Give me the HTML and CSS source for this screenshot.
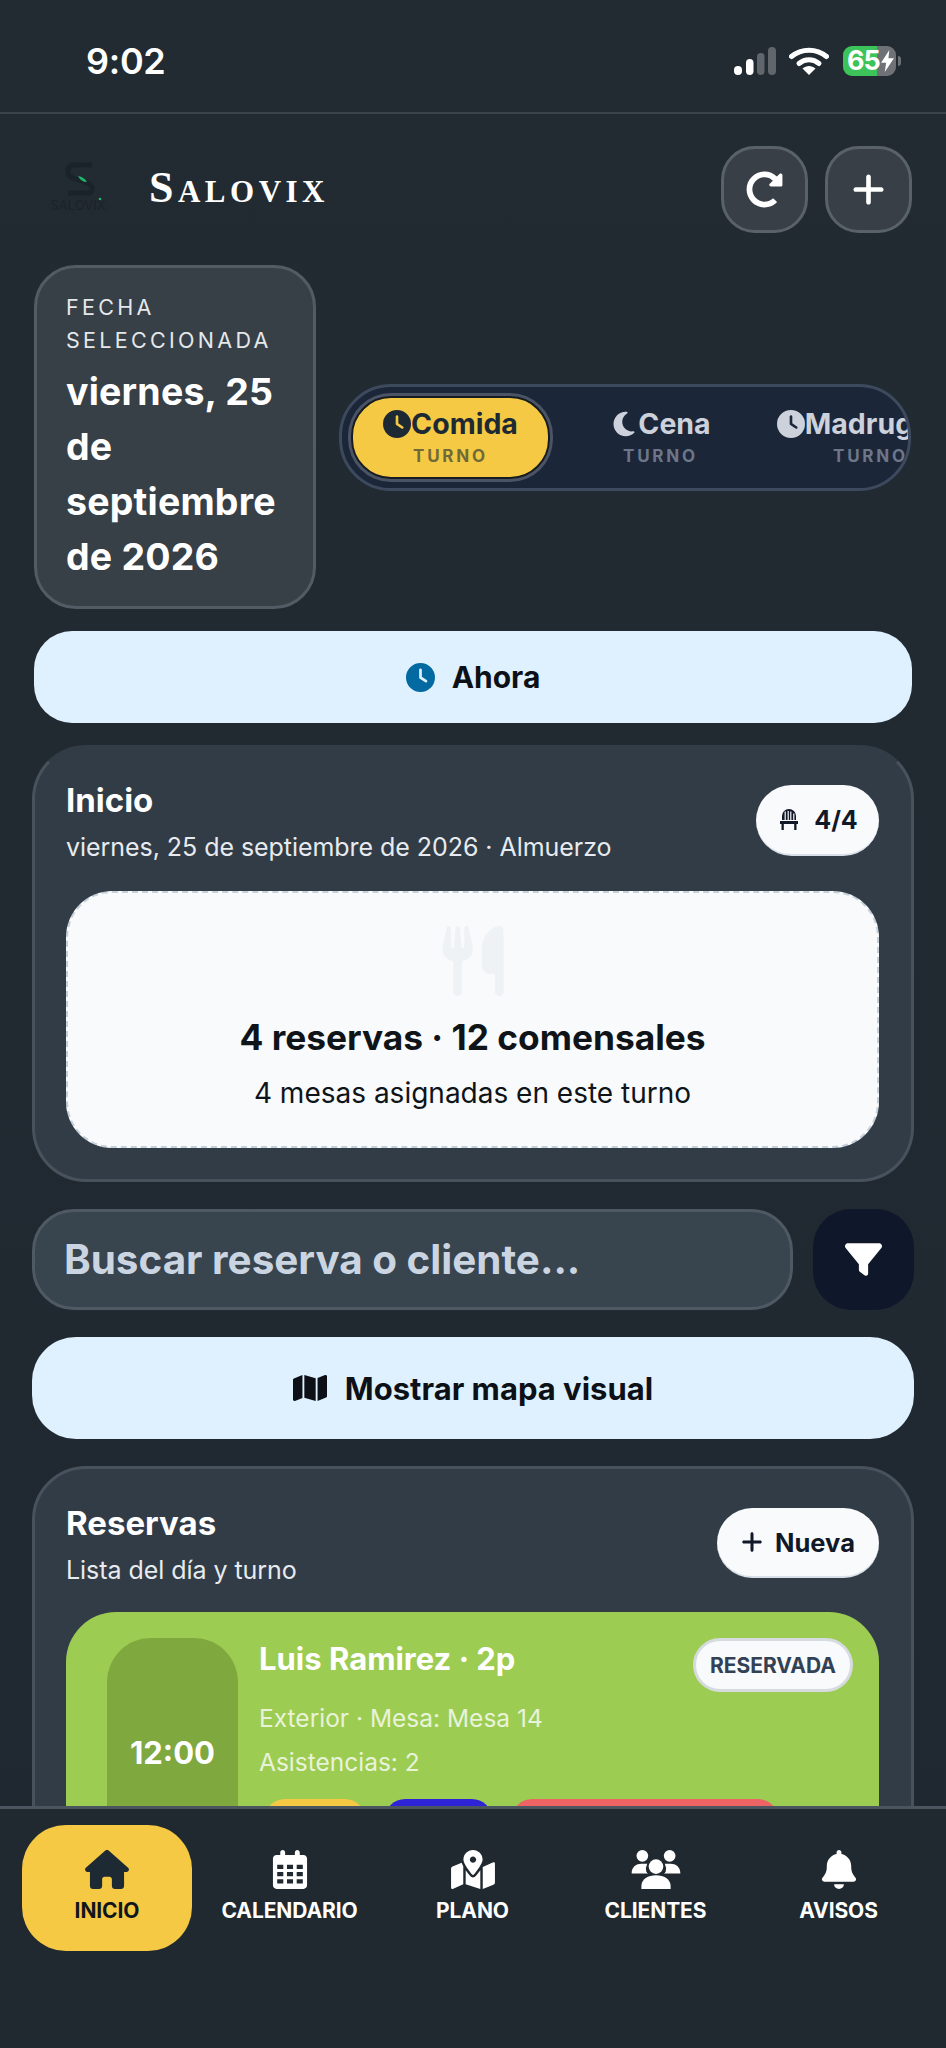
FILE: index.html
```html
<!DOCTYPE html>
<html lang="es">
<head>
    <meta charset="UTF-8">
    <meta name="viewport" content="width=device-width, initial-scale=1.0">
    <link rel="stylesheet" href="styles.css">
    <title>Salovix</title>
</head>
<body>
    <div class="phone">
        <div class="status">
            <span class="status_time">9:02</span>
            <div class="status_icons">
                <svg class="signal" viewBox="0 0 42 28">
                    <rect x="0" y="19" width="8" height="9" rx="4" fill="#fff"/>
                    <rect x="12" y="12" width="7.5" height="16" rx="3.7" fill="#fff"/>
                    <rect x="23" y="6" width="7.5" height="22" rx="3.7" fill="#60666c"/>
                    <rect x="34" y="0" width="8" height="28" rx="4" fill="#60666c"/>
                </svg>
                <svg class="wifi" viewBox="0 0 40 28">
                    <path d="M2.5 9.5C12.500 1 27.500 1 37.500 9.500" fill="none" stroke="#fff" stroke-width="5" stroke-linecap="round"/>
                    <path d="M10 16.500C16 11.500 24 11.500 30 16.500" fill="none" stroke="#fff" stroke-width="5" stroke-linecap="round"/>
                    <path d="M13.500 21.500C17.500 18 22.500 18 26.500 21.500L20 28Z" fill="#fff"/>
                </svg>
                <div class="battery">
                    <span>65</span>
                    <svg viewBox="0 0 14 24"><path d="M9 0 0 14h5.500L4 24 14 9H8Z" fill="#fff"/></svg>
                </div>
                <div class="battery_nub"></div>
            </div>
        </div>

        <div class="top">
            <div class="brand">
                <svg class="logo" viewBox="0 0 64 56">
                    <path d="M46 3H28Q22 3 22 8V11Q22 14 27 16L41 21Q46 23 46 26V28Q46 31 40 31H22" fill="none" stroke="#1a222a" stroke-width="5"/>
                    <path d="M32 14Q38 15 41 20Q35 20 32 14Z" fill="#1fb868"/>
                    <circle cx="54" cy="37" r="1.300" fill="#1fb868"/>
                    <text x="32" y="48" text-anchor="middle" class="logo_text">SALOVIX</text>
                </svg>
                <span class="brand_name">Salovix</span>
            </div>
            <div class="top_btns">
                <button class="round_btn">
                    <svg viewBox="0 0 512 512"><path d="M256.500 8c66.300.1 126.400 26.200 170.900 68.700l35.700-35.700C478.100 25.900 504 36.600 504 57.900V192c0 13.300-10.700 24-24 24H345.900c-21.400 0-32.100-25.900-17-41l41.800-41.700c-30.900-28.900-70.800-44.900-113.200-45.300-92.400-.8-170.300 74-169.500 169.400C88.800 348 162.200 424 256 424c41.100 0 80-14.700 110.600-41.600 4.700-4.100 11.900-3.900 16.400.6l39.700 39.700c4.900 4.900 4.600 12.800-.5 17.400C378.200 479.800 319.900 504 256 504 119 504 8 393 8 256 8 119.200 119.600 7.800 256.500 8z"/></svg>
                </button>
                <button class="round_btn">
                    <svg viewBox="0 0 448 512"><path d="M256 80c0-17.700-14.300-32-32-32s-32 14.300-32 32V224H48c-17.700 0-32 14.300-32 32s14.300 32 32 32H192V432c0 17.700 14.300 32 32 32s32-14.300 32-32V288H400c17.700 0 32-14.300 32-32s-14.300-32-32-32H256V80z"/></svg>
                </button>
            </div>
        </div>

        <div class="content">
            <div class="date_row">
                <div class="date_card">
                    <div class="date_label">FECHA SELECCIONADA</div>
                    <div class="date_value">viernes, 25 de septiembre de 2026</div>
                </div>
                <div class="shifts">
                    <div class="shift shift_active">
                        <div class="shift_name">
                            <svg viewBox="0 0 512 512"><path d="M256 0a256 256 0 1 1 0 512A256 256 0 1 1 256 0zM232 120V256c0 8 4 15.500 10.700 20l96 64c11 7.400 25.900 4.400 33.300-6.700s4.400-25.900-6.700-33.300L280 243.200V120c0-13.300-10.700-24-24-24s-24 10.700-24 24z"/></svg>
                            Comida
                        </div>
                        <div class="shift_sub">TURNO</div>
                    </div>
                    <div class="shift">
                        <div class="shift_name">
                            <svg viewBox="0 0 384 512"><path d="M223.500 32C100 32 0 132.300 0 256S100 480 223.500 480c60.600 0 115.500-24.200 155.800-63.400c5-4.900 6.300-12.500 3.100-18.700s-10.100-9.700-17-8.500c-9.800 1.700-19.800 2.600-30.100 2.600c-96.900 0-175.500-78.800-175.500-176c0-65.800 36-123.100 89.300-153.300c6.100-3.500 9.200-10.500 7.700-17.300s-7.300-11.900-14.300-12.500c-6.300-.5-12.600-.8-19-.8z"/></svg>
                            Cena
                        </div>
                        <div class="shift_sub">TURNO</div>
                    </div>
                    <div class="shift">
                        <div class="shift_name">
                            <svg viewBox="0 0 512 512"><path d="M256 0a256 256 0 1 1 0 512A256 256 0 1 1 256 0zM232 120V256c0 8 4 15.500 10.700 20l96 64c11 7.400 25.900 4.400 33.300-6.700s4.400-25.900-6.700-33.300L280 243.200V120c0-13.300-10.700-24-24-24s-24 10.700-24 24z"/></svg>
                            Madrugada
                        </div>
                        <div class="shift_sub">TURNO</div>
                    </div>
                </div>
            </div>

            <button class="light_btn now_btn">
                <svg viewBox="0 0 512 512"><path d="M256 0a256 256 0 1 1 0 512A256 256 0 1 1 256 0zM232 120V256c0 8 4 15.500 10.700 20l96 64c11 7.400 25.900 4.400 33.300-6.700s4.400-25.900-6.700-33.300L280 243.200V120c0-13.300-10.700-24-24-24s-24 10.700-24 24z"/></svg>
                Ahora
            </button>

            <div class="panel panel_summary">
                <div class="panel_head">
                    <div>
                        <div class="panel_title">Inicio</div>
                        <div class="panel_sub">viernes, 25 de septiembre de 2026 · Almuerzo</div>
                    </div>
                    <div class="pill">
                        <svg viewBox="0 0 24 24"><path d="M5 12V8a7 7 0 0 1 14 0v4h-1.600V5.500h-1.200V12h-1.800V3.500h-1.200V12h-1.400V3h-1.200v9H8.800V3.500H7.600V12ZM3 13h18v3h-1.500v6h-2.300v-6H6.800v6H4.500v-6H3Z"/></svg>
                        4/4
                    </div>
                </div>
                <div class="summary_box">
                    <svg class="summary_icon" viewBox="0 0 448 512"><path d="M416 0C400 0 288 32 288 176V288c0 35.300 28.700 64 64 64h32V480c0 17.700 14.300 32 32 32s32-14.300 32-32V352 240 32c0-17.700-14.300-32-32-32zM64 16C64 7.800 57.900 1 49.700 .1S34.200 4.600 32.400 12.500L2.100 148.800C.7 155.100 0 161.500 0 167.900c0 45.900 35.100 83.600 80 87.700V480c0 17.700 14.300 32 32 32s32-14.300 32-32V255.600c44.900-4.100 80-41.800 80-87.700c0-6.400-.7-12.800-2.100-19.100L191.600 12.500c-1.800-8-9.300-13.300-17.400-12.400S160 7.800 160 16V150.200c0 5.400-4.400 9.800-9.800 9.800c-5.100 0-9.300-3.900-9.800-9L127.900 14.600C127.200 6.300 120.300 0 112 0s-15.200 6.300-15.900 14.600L83.700 151c-.5 5.100-4.700 9-9.800 9c-5.400 0-9.800-4.400-9.800-9.800V16z"/></svg>
                    <div class="summary_title">4 reservas · 12 comensales</div>
                    <div class="summary_sub">4 mesas asignadas en este turno</div>
                </div>
            </div>

            <div class="search_row">
                <div class="search_box">Buscar reserva o cliente...</div>
                <button class="filter_btn">
                    <svg viewBox="0 0 512 512"><path d="M3.900 54.900C10.500 40.900 24.500 32 40 32H472c15.500 0 29.500 8.900 36.100 22.900s4.600 30.500-5.200 42.500L320 320.900V448c0 12.100-6.800 23.200-17.700 28.600s-23.800 4.300-33.500-3l-64-48c-8.100-6-12.800-15.500-12.800-25.600V320.900L9 97.300C-.7 85.400-2.800 68.800 3.900 54.900z"/></svg>
                </button>
            </div>

            <button class="light_btn map_btn">
                <svg viewBox="0 0 576 512"><path d="M384 476.100L192 421.200V35.900L384 90.800V476.100zm32-1.200V88.400L543.100 37.500c15.800-6.300 32.900 5.300 32.900 22.300V394.600c0 9.800-6 18.600-15.100 22.300L416 474.800zM15.100 95.100L160 37.200V423.600L32.900 474.500C17.100 480.800 0 469.200 0 452.200V117.400c0-9.800 6-18.600 15.100-22.300z"/></svg>
                Mostrar mapa visual
            </button>

            <div class="panel panel_list">
                <div class="panel_head">
                    <div>
                        <div class="panel_title">Reservas</div>
                        <div class="panel_sub">Lista del día y turno</div>
                    </div>
                    <button class="pill pill_new">
                        <svg viewBox="0 0 448 512"><path d="M256 80c0-17.700-14.300-32-32-32s-32 14.300-32 32V224H48c-17.700 0-32 14.300-32 32s14.300 32 32 32H192V432c0 17.700 14.300 32 32 32s32-14.300 32-32V288H400c17.700 0 32-14.300 32-32s-14.300-32-32-32H256V80z"/></svg>
                        Nueva
                    </button>
                </div>
                <div class="booking">
                    <div class="booking_time">12:00</div>
                    <div class="booking_info">
                        <div class="booking_head">
                            <div class="booking_name">Luis Ramirez · 2p</div>
                            <div class="booking_state">RESERVADA</div>
                        </div>
                        <div class="booking_line">Exterior · Mesa: Mesa 14</div>
                        <div class="booking_line">Asistencias: 2</div>
                        <div class="booking_tags">
                            <span class="tag tag_yellow"></span>
                            <span class="tag tag_blue"></span>
                            <span class="tag tag_red"></span>
                        </div>
                    </div>
                </div>
            </div>
        </div>

        <div class="nav">
            <div class="nav_item nav_active">
                <svg viewBox="0 0 576 512"><path d="M575.800 255.500c0 18-15 32.100-32 32.100h-32l.7 160.200c0 2.700-.2 5.400-.5 8.100V472c0 22.100-17.900 40-40 40H456c-1.100 0-2.200 0-3.300-.1c-1.400 .1-2.800 .1-4.200 .1H416 392c-22.100 0-40-17.900-40-40V448 384c0-17.700-14.300-32-32-32H256c-17.700 0-32 14.300-32 32v64 24c0 22.100-17.900 40-40 40H160 128.100c-1.500 0-3-.1-4.500-.2c-1.200 .1-2.400 .2-3.600 .2H104c-22.100 0-40-17.900-40-40V360c0-.9 0-1.900 .1-2.800V287.600H32c-18 0-32-14-32-32.100c0-9 3-17 10-24L266.400 8c7-7 15-8 22-8s15 2 21 7L564.800 231.500c8 7 12 15 11 24z"/></svg>
                <span>INICIO</span>
            </div>
            <div class="nav_item">
                <svg viewBox="0 0 448 512"><path d="M128 0c17.700 0 32 14.300 32 32V64H288V32c0-17.700 14.300-32 32-32s32 14.300 32 32V64h48c26.500 0 48 21.500 48 48V464c0 26.500-21.500 48-48 48H48c-26.500 0-48-21.500-48-48V112C0 85.500 21.500 64 48 64H96V32c0-17.700 14.300-32 32-32zM56 192v56h80V192Zm128 0v56h80V192Zm128 0v56h80V192ZM56 288v56h80V288Zm128 0v56h80V288Zm128 0v56h80V288ZM56 384v56h80V384Zm128 0v56h80V384Zm128 0v56h80V384Z" fill-rule="evenodd"/></svg>
                <span>CALENDARIO</span>
            </div>
            <div class="nav_item">
                <svg viewBox="0 0 576 512"><path d="M288 0c-69.590 0-126 56.410-126 126 0 56.260 82.350 158.800 113.900 196.020 6.390 7.540 17.820 7.540 24.200 0C331.650 284.800 414 182.260 414 126 414 56.410 357.590 0 288 0zm0 168c-23.200 0-42-18.800-42-42s18.800-42 42-42 42 18.800 42 42-18.800 42-42 42zM20.120 215.950A32.006 32.006 0 0 0 0 245.660v250.320c0 11.320 11.430 19.060 21.940 14.860L160 448V214.920c-8.840-15.980-16.070-31.540-21.250-46.420L20.120 215.950zM288 359.670c-14.070 0-27.380-6.180-36.510-16.960-19.660-23.200-40.570-49.620-59.490-76.720V448l192 64V266c-18.920 27.090-39.820 53.520-59.490 76.720-9.130 10.770-22.440 16.950-36.510 16.950zm266.060-198.510L416 224v288l139.880-55.950A31.996 31.996 0 0 0 576 426.340V176.020c0-11.320-11.430-19.060-21.940-14.860z"/></svg>
                <span>PLANO</span>
            </div>
            <div class="nav_item">
                <svg class="nav_users" viewBox="0 0 50 40">
                    <circle cx="11" cy="6" r="6"/>
                    <circle cx="39" cy="6" r="6"/>
                    <path d="M0 24C0 17 5 14 10 14H16Q14 18 15 22 16 24 17 24Z"/>
                    <path d="M50 24C50 17 45 14 40 14H34Q36 18 35 22 34 24 33 24Z"/>
                    <circle cx="25" cy="17" r="7.500"/>
                    <path d="M10 40V37C10 30 17 26 25 26S40 30 40 37V40Z"/>
                </svg>
                <span>CLIENTES</span>
            </div>
            <div class="nav_item">
                <svg viewBox="0 0 448 512"><path d="M224 0c-17.700 0-32 14.300-32 32V51.200C119 66 64 130.600 64 208v18.800c0 47-17.300 92.400-48.500 127.600l-7.400 8.300c-8.400 9.400-10.400 22.900-5.300 34.400S19.400 416 32 416H416c12.600 0 24-7.400 29.200-18.900s3.100-25-5.300-34.400l-7.400-8.300C401.300 319.200 384 273.900 384 226.800V208c0-77.400-55-142-128-156.800V32c0-17.700-14.300-32-32-32zm45.300 493.300c12-12 18.700-28.300 18.700-45.300H224 160c0 17 6.700 33.300 18.700 45.300s28.300 18.700 45.300 18.700s33.300-6.700 45.300-18.700z"/></svg>
                <span>AVISOS</span>
            </div>
        </div>
    </div>
</body>
</html>
```

FILE: styles.css
```css
body, html {
    margin: 0;
    height: 100%;
    overflow: hidden;
    background-color: #212a31;
    font-family: "Inter", "Noto Sans", sans-serif;
    color: #fff;
}

button {
    font-family: inherit;
    border: 0;
    padding: 0;
}

.phone {
    display: flex;
    flex-direction: column;
    height: 2048px;
    background: linear-gradient(#222b32, #1f2830);
}

/* status bar */
.status {
    flex: none;
    display: flex;
    justify-content: space-between;
    align-items: center;
    height: 114px;
    box-sizing: border-box;
    padding: 9px 45px 0 86px;
    border-bottom: 2px solid #3b444c;
}

.status_time {
    font-size: 36px;
    font-weight: 600;
    letter-spacing: -.3px;
}

.status_icons {
    display: flex;
    align-items: center;
}

.signal {
    width: 42px;
    height: 28px;
    margin-right: 13px;
}

.wifi {
    width: 40px;
    height: 28px;
    margin-right: 14px;
}

.battery {
    display: flex;
    align-items: center;
    gap: 1px;
    width: 53px;
    height: 30px;
    box-sizing: border-box;
    padding-left: 4px;
    border-radius: 9px;
    background: linear-gradient(90deg, #3cc35a 64%, #6e7276 64%);
    font-size: 27px;
    font-weight: 700;
}

.battery span {
    letter-spacing: -1px;
}

.battery svg {
    width: 13px;
    height: 22px;
}

.battery_nub {
    width: 3px;
    height: 10px;
    margin-left: 2px;
    border-radius: 0 3px 3px 0;
    background-color: #6e7276;
}

/* header */
.top {
    flex: none;
    display: flex;
    justify-content: space-between;
    align-items: center;
    height: 151px;
    box-sizing: border-box;
    padding: 0 34px 0 46px;
}

.brand {
    display: flex;
    align-items: center;
    gap: 39px;
}

.logo {
    width: 64px;
    height: 56px;
}

.logo_text {
    font-size: 13px;
    fill: #1a222a;
}

.brand_name {
    margin-top: -4px;
    font-family: "Liberation Serif", serif;
    font-variant: small-caps;
    font-size: 44px;
    font-weight: 700;
    letter-spacing: 4.500px;
    line-height: 1;
}

.top_btns {
    display: flex;
    gap: 17px;
}

.round_btn {
    display: flex;
    justify-content: center;
    align-items: center;
    width: 87px;
    height: 87px;
    box-sizing: border-box;
    border: 3px solid #59626b;
    border-radius: 34px;
    background-color: #393f47;
}

.round_btn svg {
    width: 37px;
    height: 37px;
    fill: #fff;
}

/* main column */
.content {
    flex: 1;
    min-height: 0;
    overflow: hidden;
    display: flex;
    flex-direction: column;
    padding: 0 32px;
}

.date_row {
    flex: none;
    display: flex;
    align-items: center;
    gap: 23px;
    padding: 0 3px 0 2px;
}

.date_card {
    flex: none;
    width: 282px;
    height: 344px;
    box-sizing: border-box;
    padding: 23px 10px 0 29px;
    border: 3px solid #535c65;
    border-radius: 42px;
    background-color: #373f47;
}

.date_label {
    font-size: 21.500px;
    font-weight: 400;
    line-height: 33px;
    letter-spacing: 3.300px;
    color: #e5e8eb;
}

.date_value {
    margin-top: 7px;
    font-size: 37.500px;
    font-weight: 700;
    line-height: 55px;
    letter-spacing: .2px;
}

.shifts {
    flex: 1;
    min-width: 0;
    height: 107px;
    box-sizing: border-box;
    display: flex;
    gap: 11px;
    padding: 9px;
    border: 3px solid #3d4a5e;
    border-radius: 52px;
    background-color: #1c2639;
    overflow: hidden;
}

.shift {
    flex: none;
    width: 199px;
    box-sizing: border-box;
    display: flex;
    flex-direction: column;
    align-items: center;
    justify-content: center;
    gap: 8px;
    border: 2px solid transparent;
    border-radius: 40px;
    color: #ccd1db;
}

.shift_active {
    border-color: #161c22;
    box-shadow: 0 0 0 3px #4a5465;
    background-color: #f6c944;
    color: #1e2a33;
}

.shift_name {
    display: flex;
    align-items: center;
    font-size: 28.500px;
    font-weight: 700;
    line-height: 30px;
    white-space: nowrap;
}

.shift_name svg {
    width: 28px;
    height: 28px;
    fill: currentColor;
}

.shift_sub {
    font-size: 17px;
    font-weight: 700;
    line-height: 18px;
    letter-spacing: 2.800px;
    color: #6d7789;
}

.shift_active .shift_sub {
    color: #6f6a37;
}

.light_btn {
    flex: none;
    display: flex;
    justify-content: center;
    align-items: center;
    background-color: #dff1fe;
    color: #0d1117;
    font-weight: 700;
}

.now_btn {
    height: 92px;
    margin: 22px 2px 0;
    gap: 17px;
    border-radius: 38px;
    font-size: 30px;
}

.now_btn svg {
    width: 29px;
    height: 29px;
    fill: #0369a1;
}

.panel {
    flex: none;
    box-sizing: border-box;
    padding: 0 31px;
    border: 3px solid #48525c;
    border-radius: 54px;
    background-color: #323c46;
}

.panel_summary {
    height: 437px;
    margin-top: 22px;
    padding-top: 37px;
    border-top-color: transparent;
}

.panel_head {
    display: flex;
    justify-content: space-between;
}

.panel_title {
    margin-top: -4px;
    font-size: 33px;
    font-weight: 700;
    line-height: 38px;
}

.panel_sub {
    margin-top: 13px;
    font-size: 25px;
    font-weight: 400;
    line-height: 30px;
    letter-spacing: -.05px;
    color: #e7ebef;
}

.pill {
    flex: none;
    display: flex;
    align-items: center;
    justify-content: center;
    gap: 13px;
    width: 123px;
    height: 71px;
    box-sizing: border-box;
    margin-right: 1px;
    border-bottom: 2px solid #d9dfe6;
    border-radius: 36px;
    background-color: #f8fafc;
    color: #111827;
    font-size: 25px;
    font-weight: 700;
}

.pill svg {
    width: 24px;
    height: 26px;
    fill: #111827;
}

.summary_box {
    height: 257px;
    box-sizing: border-box;
    margin: 29px 1px 0 0;
    display: flex;
    flex-direction: column;
    align-items: center;
    padding-top: 33px;
    border: 2px dashed #c6d0da;
    border-radius: 46px;
    background-color: #f8fafc;
    color: #0f1419;
}

.summary_icon {
    width: 62px;
    height: 70px;
    fill: #eff2f4;
}

.summary_title {
    margin-top: 21px;
    font-size: 35.300px;
    font-weight: 700;
    line-height: 42px;
}

.summary_sub {
    margin-top: 17px;
    font-size: 28px;
    font-weight: 400;
    line-height: 34px;
}

.search_row {
    flex: none;
    display: flex;
    gap: 20px;
    margin-top: 27px;
}

.search_box {
    flex: 1;
    height: 101px;
    box-sizing: border-box;
    display: flex;
    align-items: center;
    padding-left: 29px;
    border: 3px solid #4e5964;
    border-radius: 42px;
    background-color: #38444e;
    color: #cbd5e1;
    font-size: 40.400px;
    font-weight: 700;
}

.filter_btn {
    flex: none;
    display: flex;
    justify-content: center;
    align-items: center;
    width: 101px;
    height: 101px;
    border-radius: 38px;
    background-color: #0f172a;
}

.filter_btn svg {
    width: 37px;
    height: 37px;
    fill: #fff;
}

.map_btn {
    height: 102px;
    margin-top: 27px;
    gap: 18px;
    border-radius: 44px;
    font-size: 31px;
}

.map_btn svg {
    width: 34px;
    height: 34px;
    fill: #0d1117;
}

.panel_list {
    margin-top: 27px;
    height: 500px;
    padding-top: 39px;
}

.pill_new {
    width: 162px;
    height: 70px;
    gap: 12px;
    font-size: 25.500px;
    font-family: inherit;
}

.pill_new svg {
    width: 22px;
    height: 24px;
}

.booking {
    display: flex;
    align-items: flex-start;
    gap: 21px;
    height: 300px;
    margin: 27px 1px 0 0;
    padding: 26px 26px 0 41px;
    border-radius: 50px;
    background-color: #9ccc52;
}

.booking_time {
    flex: none;
    display: flex;
    justify-content: center;
    align-items: center;
    width: 131px;
    height: 228px;
    border-radius: 44px;
    background-color: #7fa83f;
    font-size: 31px;
    font-weight: 700;
}

.booking_info {
    flex: 1;
    min-width: 0;
}

.booking_head {
    display: flex;
    justify-content: space-between;
    align-items: flex-start;
    height: 63px;
}

.booking_name {
    margin-top: 3px;
    font-size: 31px;
    font-weight: 700;
    line-height: 36px;
}

.booking_state {
    display: flex;
    align-items: center;
    height: 54px;
    box-sizing: border-box;
    padding: 0 14px;
    border: 3px solid #d6dbe0;
    border-radius: 28px;
    background-color: #f8fafc;
    color: #334155;
    font-size: 21px;
    font-weight: 700;
}

.booking_line {
    height: 44px;
    font-size: 24.500px;
    line-height: 34px;
    color: #e9f3da;
}

.booking_tags {
    display: flex;
    gap: 20px;
    margin-top: 10px;
    padding-left: 6px;
}

.tag {
    height: 40px;
    border-radius: 20px;
}

.tag_yellow {
    width: 100px;
    background-color: #f6c944;
}

.tag_blue {
    width: 107px;
    background-color: #2f23d8;
}

.tag_red {
    width: 266px;
    background-color: #ee6464;
}

/* bottom nav */
.nav {
    flex: none;
    display: grid;
    grid-template-columns: repeat(5, 183px);
    align-items: start;
    height: 242px;
    box-sizing: border-box;
    padding: 16px 0 0 15px;
    border-top: 3px solid #4a5560;
    background-color: #20292f;
}

.nav_item {
    display: flex;
    flex-direction: column;
    align-items: center;
    height: 126px;
    box-sizing: border-box;
    padding-top: 25px;
    font-size: 21px;
    font-weight: 700;
}

.nav_item svg {
    height: 39px;
    width: 52px;
    fill: #fff;
}

.nav_item span {
    margin-top: 10px;
    line-height: 24px;
    letter-spacing: -.1px;
}

.nav_active {
    margin: 0 6px 0 7px;
    border-radius: 44px;
    background-color: #f6c944;
    color: #10161c;
}

.nav_active svg {
    fill: #1e2a33;
}
```
